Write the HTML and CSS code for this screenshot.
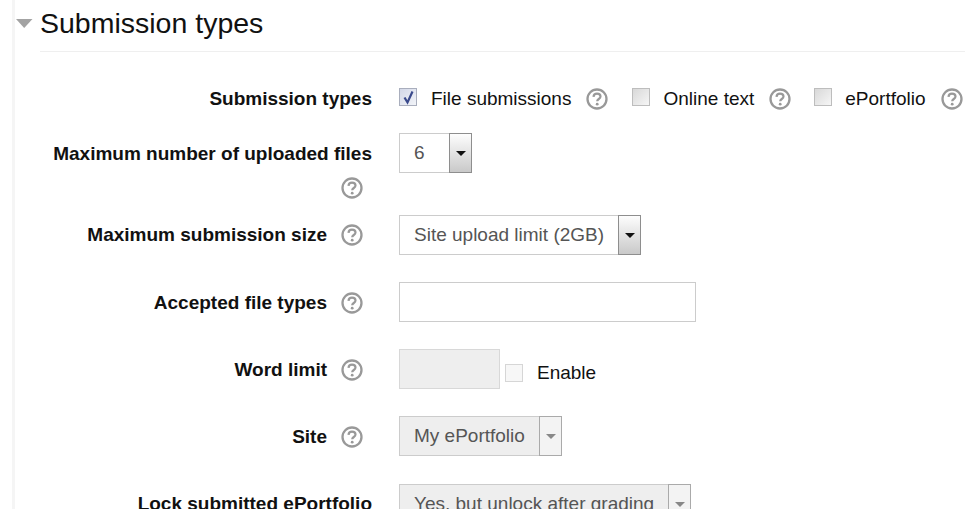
FILE: index.html
```html
<!DOCTYPE html>
<html lang="en">
<head>
<meta charset="utf-8">
<title>Submission types</title>
<link rel="stylesheet" href="styles.css">
</head>
<body>
<svg class="defs" width="0" height="0" aria-hidden="true">
  <symbol id="help" viewBox="0 0 22 22">
    <circle cx="11" cy="11" r="9.500" fill="none" stroke="#999" stroke-width="2.300"/>
    <path d="M7.500 8.800c.2-2.100 1.700-3.100 3.500-3.100 2 0 3.500 1.100 3.500 2.800 0 2.500-3.300 2.500-3.300 4.800" fill="none" stroke="#999" stroke-width="2.200"/>
    <circle cx="11.200" cy="16.200" r="1.400" fill="#999"/>
  </symbol>
</svg>
<main class="page">
  <header class="section-head">
    <svg class="twisty" width="17" height="9" viewBox="0 0 17 9" aria-hidden="true"><path d="M0 0h16.500L8.200 9z" fill="#a3a3a3"/></svg>
    <h2 class="section-title">Submission types</h2>
  </header>
  <form class="form">
    <div class="row row-first">
      <div class="label">Submission types</div>
      <div class="control">
        <span class="check check-on"><svg width="15" height="15" viewBox="0 0 15 15" aria-hidden="true"><path d="M3.500 7.500l3 5L11.500 1.500" fill="none" stroke="#3a4a8c" stroke-width="2.200"/></svg></span>
        <span class="check-text">File submissions</span>
        <svg class="help help-inline"><use href="#help"/></svg>
        <span class="check check-second"></span>
        <span class="check-text check-text-tight">Online text</span>
        <svg class="help help-inline"><use href="#help"/></svg>
        <span class="check check-third"></span>
        <span class="check-text check-text-tight">ePortfolio</span>
        <svg class="help help-inline"><use href="#help"/></svg>
      </div>
    </div>
    <div class="row">
      <div class="label label-lower">Maximum number of uploaded files<svg class="help help-label"><use href="#help"/></svg></div>
      <div class="control">
        <div class="select select-num"><span class="select-value">6</span><span class="select-btn"><i class="caret"></i></span></div>
      </div>
    </div>
    <div class="row">
      <div class="label">Maximum submission size<svg class="help help-label"><use href="#help"/></svg></div>
      <div class="control">
        <div class="select select-size"><span class="select-value">Site upload limit (2GB)</span><span class="select-btn"><i class="caret"></i></span></div>
      </div>
    </div>
    <div class="row">
      <div class="label label-lower">Accepted file types<svg class="help help-label"><use href="#help"/></svg></div>
      <div class="control"><div class="text-input"></div></div>
    </div>
    <div class="row">
      <div class="label label-lower">Word limit<svg class="help help-label"><use href="#help"/></svg></div>
      <div class="control">
        <div class="text-input text-input-off"></div>
        <span class="check check-off"></span>
        <span class="check-text enable-text">Enable</span>
      </div>
    </div>
    <div class="row row-site">
      <div class="label label-lower">Site<svg class="help help-label"><use href="#help"/></svg></div>
      <div class="control">
        <div class="select select-off select-site"><span class="select-value">My ePortfolio</span><span class="select-btn"><i class="caret"></i></span></div>
      </div>
    </div>
    <div class="row">
      <div class="label">Lock submitted ePortfolio</div>
      <div class="control">
        <div class="select select-off select-lock"><span class="select-value">Yes, but unlock after grading</span><span class="select-btn"><i class="caret"></i></span></div>
      </div>
    </div>
  </form>
</main>
</body>
</html>
```

FILE: styles.css
```css
html, body {
  margin: 0;
  height: 100%;
  overflow: hidden;
  background: #fff;
}
body {
  font-family: "Liberation Sans", Arial, sans-serif;
  font-size: 19px;
  color: #111;
}
.defs {
  display: block;
  height: 0;
}
.page {
  margin-left: 12px;
  border-left: 3px solid #f5f5f5;
  height: 100%;
  box-sizing: border-box;
}
.section-head {
  display: flex;
  align-items: center;
  height: 51px;
  margin-left: 25px;
  border-bottom: 1px solid #efefef;
  position: relative;
}
.twisty {
  position: absolute;
  left: -24px;
  top: 19px;
}
.section-title {
  margin: 0 0 5px;
  font-size: 28.500px;
  font-weight: 400;
  line-height: 1;
}
.form {
  padding-top: 27px;
}
.row {
  display: flex;
  align-items: flex-start;
  min-height: 67px;
}
.row-first {
  min-height: 54px;
}
.row-site {
  min-height: 68px;
}
.label {
  width: 332px;
  margin-left: 25px;
  flex: none;
  box-sizing: border-box;
  padding: 3px 0 11px;
  text-align: right;
  font-weight: 700;
  line-height: 34px;
}
.label-lower {
  padding: 4px 0 10px;
}
.row-first .label {
  padding: 3px 0 0;
}
.help {
  width: 22px;
  height: 22px;
  vertical-align: -5px;
}
.help-label {
  margin: 0 9px 0 14px;
}
.control {
  margin-left: 27px;
  display: flex;
  align-items: center;
  min-height: 40px;
  flex: none;
}
.row-first .control {
  white-space: nowrap;
}
.check {
  box-sizing: border-box;
  width: 18px;
  height: 18px;
  border: 1px solid #bdbdbd;
  background: linear-gradient(135deg, #d8d8d8, #f6f6f6);
  display: inline-flex;
  align-items: center;
  justify-content: center;
  flex: none;
  margin-top: -4px;
}
.check-on {
  background: linear-gradient(135deg, #d3d8e8, #f2f4f8);
  border-color: #a9aebd;
}
.check-second {
  margin-left: 24px;
}
.check-third {
  margin-left: 23px;
}
.check-off {
  margin: 7px 0 0 5px;
  background: #f7f7f7;
  border-color: #d6d6d6;
}
.check-text {
  margin-left: 14px;
  margin-right: 15px;
}
.check-text-tight {
  margin-left: 13px;
}
.enable-text {
  margin: 8px 0 0 14px;
}
.help-inline {
  flex: none;
}
.select {
  display: flex;
  height: 40px;
  color: #555;
  box-sizing: border-box;
}
.select-value {
  box-sizing: border-box;
  display: flex;
  align-items: center;
  flex: 1;
  padding-left: 14px;
  border: 1px solid #ccc;
  border-right: 0;
  white-space: nowrap;
  overflow: hidden;
}
.select-btn {
  box-sizing: border-box;
  width: 23px;
  border: 1px solid #8e8e8e;
  background: linear-gradient(#fdfdfd, #c9c9c9);
  display: flex;
  align-items: center;
  justify-content: center;
}
.caret {
  width: 0;
  height: 0;
  border: 5px solid transparent;
  border-top: 5px solid #111;
  border-bottom: 0;
}
.select-num { width: 73px; }
.select-size { width: 242px; }
.select-site { width: 163px; }
.select-lock { width: 292px; }
.select-off .select-value {
  background: #eee;
}
.select-off .select-btn {
  background: #f3f3f3;
  border-color: #aaa;
}
.select-off .caret {
  border-top-color: #888;
}
.text-input {
  box-sizing: border-box;
  width: 297px;
  height: 40px;
  border: 1px solid #ccc;
  background: #fff;
}
.text-input-off {
  width: 101px;
  background: #eee;
  border-color: #d8d8d8;
}
```
